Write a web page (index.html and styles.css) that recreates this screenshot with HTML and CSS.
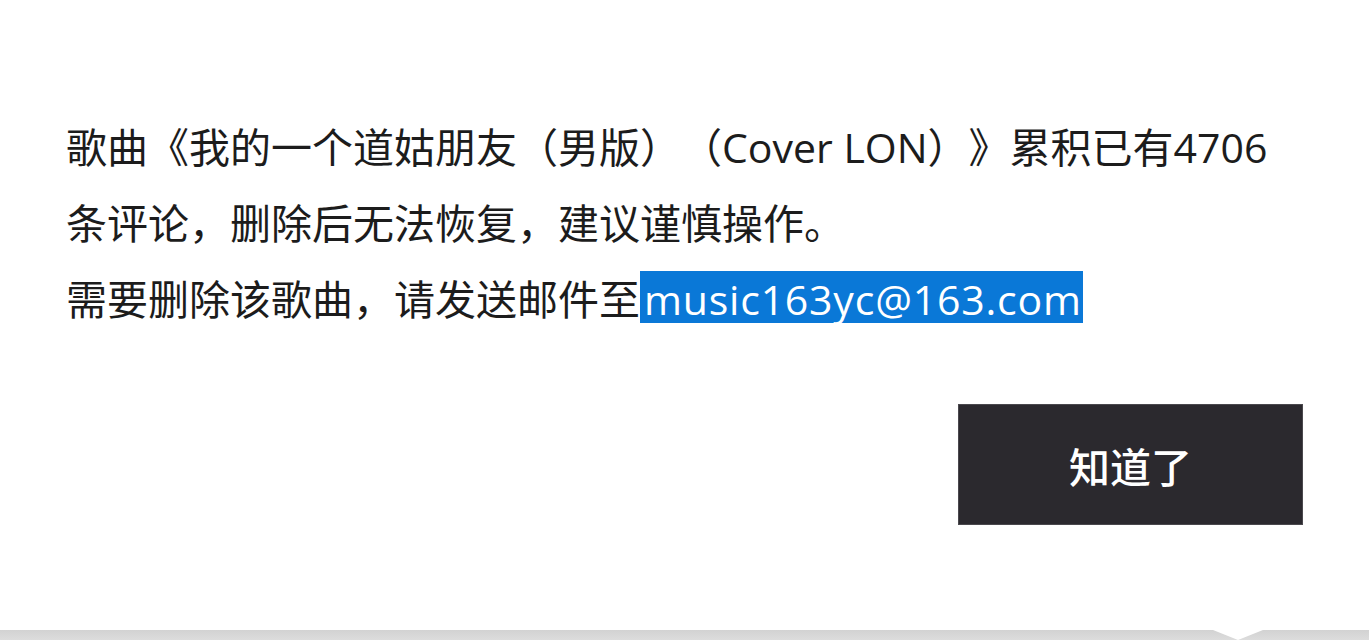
FILE: index.html
```html
<!DOCTYPE html>
<html lang="zh-CN">
<head>
<meta charset="utf-8">
<title>提示</title>
<link rel="stylesheet" href="styles.css">
</head>
<body>
<div class="dialog">
  <div class="message">
    <p class="msg-line">歌曲《我的一个道姑朋友（男版）（Cover LON）》累积已有4706条评论，删除后无法恢复，建议谨慎操作。</p>
    <p class="msg-line">需要删除该歌曲，请发送邮件至<span class="selected">music163yc@163.com</span></p>
  </div>
  <div class="actions">
    <button class="btn-ok" type="button">知道了</button>
  </div>
</div>
<div class="page-edge">
  <span class="notch"></span>
</div>
</body>
</html>
```

FILE: styles.css
```css
html, body {
  margin: 0;
  padding: 0;
  background: #ffffff;
}

body {
  width: 1369px;
  height: 640px;
  overflow: hidden;
  display: flex;
  flex-direction: column;
  font-family: "Open Sans", "Noto Sans CJK SC", sans-serif;
  color: #1c1c1c;
  text-spacing-trim: space-all;
}

.dialog {
  flex: 1;
  padding: 109px 66px 0 66px;
  display: flex;
  flex-direction: column;
}

.message {
  font-size: 41px;
  line-height: 76px;
}

.msg-line {
  margin: 0;
}

.selected {
  display: inline-block;
  background: #0a78d7;
  color: #ffffff;
  line-height: 20px;
  letter-spacing: 0.8px;
  padding: 18px 1px 14px 4px;
}

.actions {
  display: flex;
  justify-content: flex-end;
  margin-top: 67px;
}

.btn-ok {
  width: 345px;
  height: 121px;
  background: #2b292e;
  border: 1px solid #4a484d;
  color: #ffffff;
  font-family: "Noto Sans CJK SC", sans-serif;
  font-size: 41px;
  font-weight: 500;
  padding: 0;
  cursor: pointer;
}

.page-edge {
  position: relative;
  height: 10px;
  background: linear-gradient(#d2d2d2, #dcdcdc);
}

.notch {
  position: absolute;
  left: 1213px;
  top: 0;
  width: 0;
  height: 0;
  border-left: 25px solid transparent;
  border-right: 25px solid transparent;
  border-top: 10px solid #ffffff;
}
```
